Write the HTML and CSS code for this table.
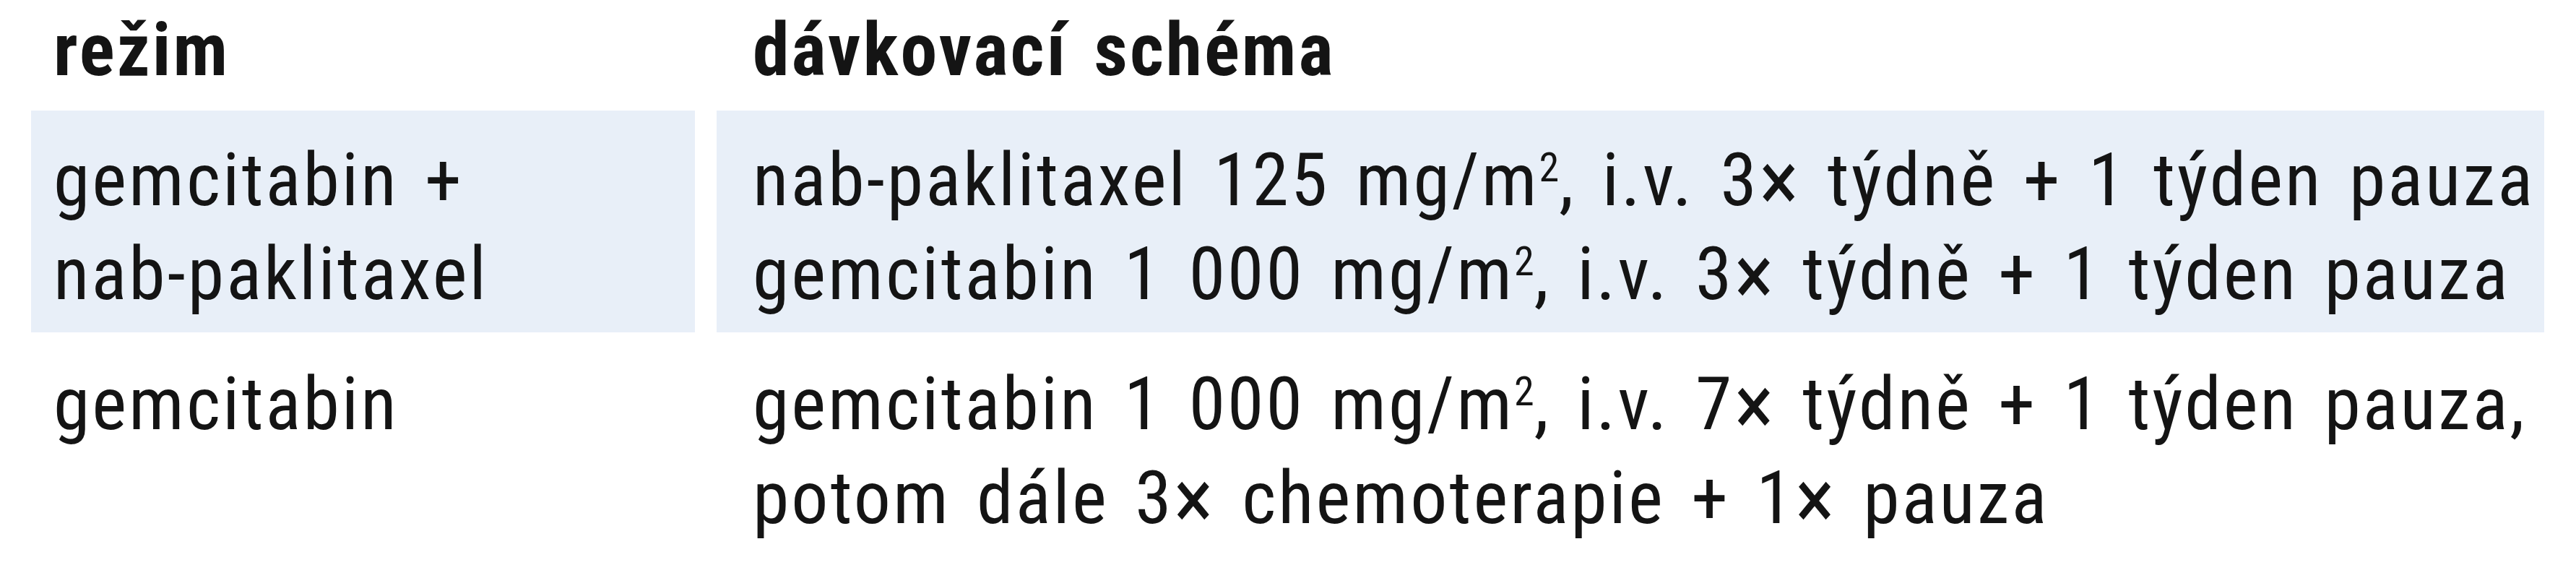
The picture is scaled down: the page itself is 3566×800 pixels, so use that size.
FILE: index.html
```html
<!DOCTYPE html>
<html lang="cs">
<head>
<meta charset="utf-8">
<title>Dávkovací schéma</title>
<link rel="stylesheet" href="styles.css">
</head>
<body>
<div class="table">
  <div class="cell head left">režim</div>
  <div class="cell head right">dávkovací schéma</div>

  <div class="cell band left r1">gemcitabin +<br>nab-paklitaxel</div>
  <div class="cell band right r1">nab-paklitaxel 125 mg/m<sup>2</sup>, i.v. 3<span class="times">×</span> týdně + 1 týden pauza<br>gemcitabin 1&nbsp;000 mg/m<sup>2</sup>, i.v. 3<span class="times">×</span> týdně + 1 týden pauza</div>

  <div class="cell left r2">gemcitabin</div>
  <div class="cell right r2">gemcitabin 1&nbsp;000 mg/m<sup>2</sup>, i.v. 7<span class="times">×</span> týdně + 1 týden pauza,<br>potom dále 3<span class="times">×</span> chemoterapie + 1<span class="times">×</span> pauza</div>
</div>
</body>
</html>
```
FILE: styles.css
```css
html, body {
  margin: 0;
  padding: 0;
  background: #ffffff;
}

body {
  font-family: "Roboto", "Liberation Sans", sans-serif;
  font-stretch: 75%;
  font-size: 102px;
  line-height: 130px;
  letter-spacing: 3px;
  word-spacing: 10px;
  color: #141414;
}

.table {
  display: grid;
  grid-template-columns: 919px 2530px;
  column-gap: 30px;
  margin-left: 43px;
}

.cell {
  white-space: nowrap;
}

.left {
  padding-left: 31px;
}

.right {
  padding-left: 50px;
}

.head {
  font-weight: 700;
  padding-top: 4px;
  padding-bottom: 19px;
}

.band {
  background: #e8eff8;
}

.r1 {
  padding-top: 31px;
  padding-bottom: 16px;
}

.r2 {
  padding-top: 34px;
}

.times {
  font-size: 1.15em;
  line-height: 0;
  vertical-align: -0.06em;
}

sup {
  font-size: 0.55em;
  line-height: 0;
  letter-spacing: 0;
  vertical-align: 0.58em;
}
```
